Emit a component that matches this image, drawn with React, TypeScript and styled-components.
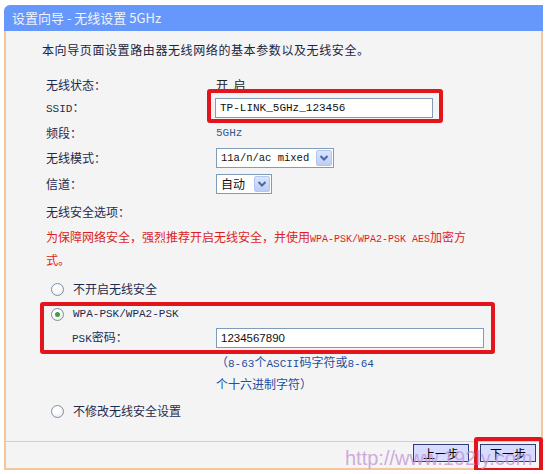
import React from 'react';
import styled, { createGlobalStyle } from 'styled-components';

const GlobalStyle = createGlobalStyle`
  html, body {
    margin: 0;
    padding: 0;
    background: #ffffff;
  }
  body {
    font-family: "Noto Sans CJK SC", "Liberation Sans", sans-serif;
    font-size: 12px;
    color: #1f2b4d;
  }
`;

const Panel = styled.div`
  position: relative;
  width: 539px;
  margin: 5px 0 0 4px;
`;

const TitleBar = styled.div`
  height: 26px;
  padding-left: 8px;
  background: #6697fb;
  border-top-left-radius: 6px;
  color: #eef3ff;
  font-size: 13px;
  line-height: 26px;
`;

const Body = styled.div`
  height: 410px;
  box-sizing: border-box;
  padding: 9px 0 0 40px;
  display: flex;
  flex-direction: column;
  background: #f4f4f4;
  border-left: 2px solid #f5c69c;
  border-right: 2px solid #f5c69c;
`;

const Intro = styled.div`
  margin-left: -4px;
  line-height: 20px;
  letter-spacing: 0.6px;
  color: #1c2540;
`;

const Form = styled.div`
  margin-top: 14px;
  display: flex;
  flex-direction: column;
`;

const Row = styled.div<{ $h: number }>`
  height: ${(p) => p.$h}px;
  display: grid;
  grid-template-columns: 170px 1fr;
  grid-template-rows: ${(p) => p.$h}px;
  align-items: center;
`;

const Label = styled.div`
  line-height: 16px;
`;

const Value = styled.div<{ $tone?: 'plain' | 'freq' }>`
  display: flex;
  align-items: center;
  line-height: 16px;
  color: ${(p) => (p.$tone === 'freq' ? '#3a5a8c' : '#222222')};
`;

const Latin = styled.span<{ $size?: number }>`
  font-family: "Liberation Mono", monospace;
  font-size: ${(p) => p.$size ?? 11}px;
`;

const Highlight = styled.div`
  display: inline-flex;
  border: 4px solid #e3141b;
  border-radius: 3px;
  background: #f4f4f4;
`;

const SsidBox = styled(Highlight)`
  margin: -8px 0 -3px -9px;
  padding: 5px 6px 1px 4px;
`;

const TextInput = styled.input<{ $w: number; $mono?: boolean }>`
  width: ${(p) => p.$w}px;
  height: 20px;
  box-sizing: border-box;
  margin: 0;
  padding: 0 4px;
  border: 1px solid #7f9db9;
  background: #ffffff;
  color: #111111;
  font-family: ${(p) => (p.$mono ? '"Liberation Mono", monospace' : '"Liberation Sans", sans-serif')};
  font-size: ${(p) => (p.$mono ? '11px' : '11.5px')};
  outline: none;
`;

const SelectBox = styled.div<{ $w: number }>`
  width: ${(p) => p.$w}px;
  height: 20px;
  box-sizing: border-box;
  display: flex;
  align-items: center;
  justify-content: space-between;
  padding: 0 1px 0 4px;
  border: 1px solid #7f9db9;
  background: #ffffff;
  color: #111111;
`;

const SelectText = styled.span<{ $mono?: boolean }>`
  font-family: ${(p) => (p.$mono ? '"Liberation Mono", monospace' : '"Noto Sans CJK SC", sans-serif')};
  font-size: ${(p) => (p.$mono ? '10.5px' : '12px')};
  line-height: 16px;
`;

const ArrowButton = styled.span`
  width: 16px;
  height: 16px;
  box-sizing: border-box;
  display: flex;
  align-items: center;
  justify-content: center;
  border: 1px solid #b2c6ee;
  border-radius: 2px;
  background: linear-gradient(#dbe5fd, #bccdf6);
`;

const Warning = styled.div`
  margin-top: 1px;
  line-height: 20px;
  color: #dc1e1e;
`;

const RadioRow = styled.div<{ $h: number; $mt?: number; $pl?: number }>`
  height: ${(p) => p.$h}px;
  margin-top: ${(p) => p.$mt ?? 0}px;
  padding-left: ${(p) => p.$pl ?? 5}px;
  display: flex;
  align-items: center;
  gap: 9px;
  line-height: 16px;
`;

const Radio = styled.span<{ $on?: boolean }>`
  width: 13px;
  height: 13px;
  box-sizing: border-box;
  display: inline-flex;
  align-items: center;
  justify-content: center;
  flex-shrink: 0;
  border-radius: 50%;
  border: 1px solid #7d8ea3;
  background: radial-gradient(circle at 40% 35%, #ffffff 30%, #e3e3e3);

  &::after {
    content: '';
    display: ${(p) => (p.$on ? 'block' : 'none')};
    width: 5px;
    height: 5px;
    border-radius: 50%;
    background: #3f9e3f;
  }
`;

const SecureBox = styled.div`
  margin: 1px 0 0 -6px;
  width: 455px;
  box-sizing: border-box;
  border: 4px solid #e3141b;
  border-radius: 3px;
  display: flex;
  flex-direction: column;
`;

const PskRow = styled.div`
  height: 28px;
  box-sizing: border-box;
  padding: 4px 0 0 28px;
  display: grid;
  grid-template-columns: 144px 1fr;
  align-items: center;
`;

const Help = styled.div`
  margin: -2px 0 0 170px;
  line-height: 20px;
  color: #1d4fa3;
`;

const Footer = styled.div`
  height: 29px;
  box-sizing: border-box;
  padding: 2px 5px 0 0;
  display: flex;
  align-items: flex-start;
  justify-content: flex-end;
  gap: 11px;
  background: #f4f4f4;
  border: 2px solid #f5c69c;
  border-top-width: 1px;
`;

const StepButton = styled.button`
  width: 56px;
  height: 18px;
  box-sizing: border-box;
  margin: 0;
  padding: 0;
  border: 1px solid #2d3e74;
  background: #d6dbff;
  color: #000000;
  font-family: "Noto Sans CJK SC", sans-serif;
  font-size: 12px;
  line-height: 15px;
`;

const ButtonHighlight = styled.div`
  margin: -7px -7px -10px -6px;
  padding: 3px 3px 6px 2px;
  border: 4px solid #e3141b;
  border-radius: 3px;
  display: flex;
`;

const Watermark = styled.div`
  position: absolute;
  left: 341px;
  top: 441px;
  font-family: "Liberation Sans", Arial, sans-serif;
  font-size: 20px;
  line-height: 24px;
  color: rgba(196, 150, 214, 0.8);
  pointer-events: none;
  white-space: nowrap;
`;

const Chevron = () => (
  <svg width="10" height="8" viewBox="0 0 10 8">
    <path d="M1.5 2 L5 5.5 L8.5 2" fill="none" stroke="#4a67a6" strokeWidth="2" />
  </svg>
);

export default function App() {
  return (
    <>
      <GlobalStyle />
      <Panel>
        <TitleBar>设置向导 - 无线设置 5GHz</TitleBar>
        <Body>
          <Intro>本向导页面设置路由器无线网络的基本参数以及无线安全。</Intro>
          <Form>
            <Row $h={22}>
              <Label>无线状态：</Label>
              <Value>开&nbsp;&nbsp;启</Value>
            </Row>
            <Row $h={24}>
              <Label><Latin>SSID</Latin>：</Label>
              <Value>
                <SsidBox>
                  <TextInput $w={218} $mono readOnly value="TP-LINK_5GHz_123456" />
                </SsidBox>
              </Value>
            </Row>
            <Row $h={26}>
              <Label>频段：</Label>
              <Value $tone="freq"><Latin>5GHz</Latin></Value>
            </Row>
            <Row $h={24}>
              <Label>无线模式：</Label>
              <Value>
                <SelectBox $w={118}>
                  <SelectText $mono>11a/n/ac mixed</SelectText>
                  <ArrowButton><Chevron /></ArrowButton>
                </SelectBox>
              </Value>
            </Row>
            <Row $h={28}>
              <Label>信道：</Label>
              <Value>
                <SelectBox $w={56}>
                  <SelectText>自动</SelectText>
                  <ArrowButton><Chevron /></ArrowButton>
                </SelectBox>
              </Value>
            </Row>
            <Row $h={28}>
              <Label>无线安全选项：</Label>
              <Value />
            </Row>
          </Form>
          <Warning>
            为保障网络安全，强烈推荐开启无线安全，并使用<Latin $size={10}>WPA-PSK/WPA2-PSK AES</Latin>加密方
            <br />
            式。
          </Warning>
          <RadioRow $h={24} $mt={7}>
            <Radio />
            <span>不开启无线安全</span>
          </RadioRow>
          <SecureBox>
            <RadioRow $h={16} $pl={7}>
              <Radio $on />
              <Latin>WPA-PSK/WPA2-PSK</Latin>
            </RadioRow>
            <PskRow>
              <Label><Latin>PSK</Latin>密码：</Label>
              <TextInput $w={268} readOnly value="1234567890" />
            </PskRow>
          </SecureBox>
          <Help>
            （<Latin>8-63</Latin>个<Latin>ASCII</Latin>码字符或<Latin>8-64</Latin>
            <br />
            个十六进制字符）
          </Help>
          <RadioRow $h={24} $mt={5}>
            <Radio />
            <span>不修改无线安全设置</span>
          </RadioRow>
        </Body>
        <Footer>
          <StepButton>上一步</StepButton>
          <ButtonHighlight>
            <StepButton>下一步</StepButton>
          </ButtonHighlight>
        </Footer>
        <Watermark>http://www.192ly.com</Watermark>
      </Panel>
    </>
  );
}
